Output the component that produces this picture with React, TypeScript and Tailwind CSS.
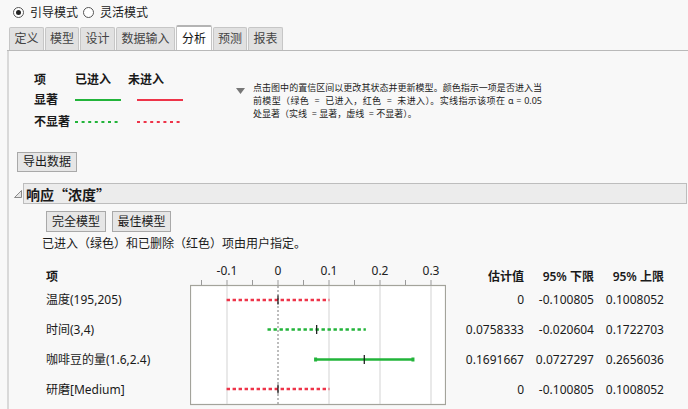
import React from "react";

const G = "#22b43a";
const R = "#ee3449";

const X = (v: number) => 88 + v * 510;

function Radio({ checked }: { checked?: boolean }) {
  return (
    <span className="w-[11px] h-[11px] rounded-full border border-[#555] bg-white flex items-center justify-center shrink-0">
      {checked && <span className="w-[5px] h-[5px] rounded-full bg-[#222]" />}
    </span>
  );
}

const tabs = [
  { t: "定义", w: "w-[35px]" },
  { t: "模型", w: "w-[34px]" },
  { t: "设计", w: "w-[35px]" },
  { t: "数据输入", w: "w-[59px]" },
  { t: "分析", w: "w-[36px]", sel: true },
  { t: "预测", w: "w-[34px]" },
  { t: "报表", w: "w-[35px]" },
];

function LegendLine({ color, dotted }: { color: string; dotted?: boolean }) {
  return (
    <svg width="46" height="4" className="block">
      <line
        x1="0"
        y1="2"
        x2="46"
        y2="2"
        stroke={color}
        strokeWidth="2"
        strokeDasharray={dotted ? "3 3.6" : undefined}
      />
    </svg>
  );
}

type Row = {
  label: string;
  lo: number;
  hi: number;
  est: number;
  color: string;
  solid?: boolean;
  e: string;
  l: string;
  u: string;
};

const rows: Row[] = [
  { label: "温度(195,205)", lo: -0.100805, hi: 0.1008052, est: 0, color: R, e: "0", l: "-0.100805", u: "0.1008052" },
  { label: "时间(3,4)", lo: -0.020604, hi: 0.1722703, est: 0.0758333, color: G, e: "0.0758333", l: "-0.020604", u: "0.1722703" },
  { label: "咖啡豆的量(1.6,2.4)", lo: 0.0727297, hi: 0.2656036, est: 0.1691667, color: G, solid: true, e: "0.1691667", l: "0.0727297", u: "0.2656036" },
  { label: "研磨[Medium]", lo: -0.100805, hi: 0.1008052, est: 0, color: R, e: "0", l: "-0.100805", u: "0.1008052" },
];

function Plot() {
  const ticks: number[] = [];
  for (let i = -3; i <= 6; i++) ticks.push(i * 0.05);
  const labels = [-0.1, 0, 0.1, 0.2, 0.3];
  const ys = [42, 71.5, 101.5, 131];
  return (
    <svg width="256" height="148" className="block shrink-0">
      {labels.map((v) => (
        <text
          key={v}
          x={X(v)}
          y="16.5"
          textAnchor="middle"
          fontSize="12"
          fill="#222"
          fontFamily="'Noto Sans', sans-serif"
        >
          {v === 0 ? "0" : v.toFixed(1)}
        </text>
      ))}
      {ticks.map((v, i) => (
        <line key={i} x1={X(v)} x2={X(v)} y1="22" y2="27.5" stroke="#9a9a9a" strokeWidth="1" />
      ))}
      <rect x="0.5" y="27.5" width="255" height="119" fill="#fff" stroke="#a3a39b" strokeWidth="1.2" />
      {[-0.1, 0.1, 0.2, 0.3].map((v) => (
        <line key={v} x1={X(v)} x2={X(v)} y1="28" y2="146" stroke="#d3d3d3" strokeWidth="1" />
      ))}
      <line x1={X(0)} x2={X(0)} y1="28" y2="146" stroke="#7a7a7a" strokeWidth="1" strokeDasharray="2 2" />
      {rows.map((r, i) => {
        const y = ys[i];
        return (
          <g key={i}>
            <line
              x1={X(r.lo)}
              x2={X(r.hi)}
              y1={y}
              y2={y}
              stroke={r.color}
              strokeWidth="2.4"
              strokeDasharray={r.solid ? undefined : "3.4 2.6"}
            />
            {r.solid && (
              <>
                <rect x={X(r.lo) - 1} y={y - 2} width="3" height="4" fill={r.color} />
                <rect x={X(r.hi) - 2} y={y - 2} width="3" height="4" fill={r.color} />
              </>
            )}
            <line x1={X(r.est)} x2={X(r.est)} y1={y - 4.5} y2={y + 4.5} stroke="#111" strokeWidth="1.2" />
          </g>
        );
      })}
    </svg>
  );
}

export default function App() {
  return (
    <div className="w-[688px] h-[409px] overflow-hidden bg-[#f8f8f8] text-[#1a1a1a] font-['Noto_Sans','Noto_Sans_CJK_SC',sans-serif] text-[12px]">
      {/* radio row */}
      <div className="h-[25px] flex items-center pl-[13px]">
        <Radio checked />
        <span className="ml-[6px] text-[12px] leading-none">引导模式</span>
        <span className="ml-[5px]">
          <Radio />
        </span>
        <span className="ml-[6px] text-[12px] leading-none">灵活模式</span>
      </div>
      {/* tabs */}
      <div className="h-[26px] ml-[7px] pl-[2px] flex items-end gap-[1px] border-b border-[#b9b9b9]">
        {tabs.map((t) =>
          t.sel ? (
            <div
              key={t.t}
              className={`${t.w} h-[25px] bg-white border-x border-t-2 border-[#c4c4c4] border-t-[#b4b4b4] rounded-t-[2px] flex items-center justify-center text-[12px] text-[#111]`}
            >
              {t.t}
            </div>
          ) : (
            <div
              key={t.t}
              className={`${t.w} h-[23px] bg-[#e1e1e1] border-x border-t border-[#c6c6c6] rounded-t-[2px] flex items-center justify-center text-[12px] text-[#444]`}
            >
              {t.t}
            </div>
          )
        )}
      </div>
      {/* content */}
      <div className="ml-[7px] border-l-2 border-[#d9d9d9] h-[358px]">
        {/* legend + description */}
        <div className="flex items-start pt-[20px]">
          <div className="pl-[25px] w-[227px] font-semibold text-[12px]">
            <div className="h-[18px] flex items-center">
              <span className="w-[41px]">项</span>
              <span className="w-[53px]">已进入</span>
              <span>未进入</span>
            </div>
            <div className="h-[22px] flex items-center">
              <span className="w-[41px]">显著</span>
              <LegendLine color={G} />
              <span className="w-[16px]" />
              <LegendLine color={R} />
            </div>
            <div className="h-[22px] flex items-center">
              <span className="w-[41px]">不显著</span>
              <LegendLine color={G} dotted />
              <span className="w-[16px]" />
              <LegendLine color={R} dotted />
            </div>
          </div>
          <div className="flex items-start mt-[10px]">
            <svg width="9" height="6" className="mt-[7px] shrink-0">
              <polygon points="0,0 9,0 4.5,6" fill="#777" />
            </svg>
            <div className="ml-[8px] text-[9px] leading-[13px] text-[#222] whitespace-nowrap">
              <div className="w-[289px] text-justify [text-align-last:justify]">点击图中的置信区间以更改其状态并更新模型。颜色指示一项是否进入当</div>
              <div className="w-[289px] text-justify [text-align-last:justify]">前模型（绿色 &nbsp;= &nbsp;已进入，红色 &nbsp;= &nbsp;未进入）。实线指示该项在 α = 0.05</div>
              <div>处显著（实线 &nbsp;= 显著，虚线 &nbsp;= 不显著）。</div>
            </div>
          </div>
        </div>
        {/* export button */}
        <div className="mt-[19px] ml-[8px]">
          <div className="w-[60px] h-[20px] border border-[#a9a9a9] bg-[#e6e6e6] flex items-center justify-center text-[12px]">
            导出数据
          </div>
        </div>
        {/* section header */}
        <div className="mt-[11px] flex items-center">
          <svg width="10" height="10" className="ml-[4px] mr-[0px] shrink-0">
            <path d="M8.5 1.5 L8.5 8.5 L1.5 8.5 Z" fill="#e6e6e6" stroke="#8a8a8a" strokeWidth="1" />
          </svg>
          <div className="flex-1 mr-[1px] h-[21px] border border-[#bdbdbd] bg-[#ececec] flex items-center pl-[2px]">
            <span className="font-bold text-[14px] font-['Noto_Sans_CJK_SC',sans-serif] leading-none">响应“浓度”</span>
          </div>
        </div>
        {/* model buttons */}
        <div className="mt-[7px] ml-[37px] flex gap-[6px]">
          <div className="w-[60px] h-[21px] border border-[#a9a9a9] bg-[#e6e6e6] flex items-center justify-center">完全模型</div>
          <div className="w-[59px] h-[21px] border border-[#a9a9a9] bg-[#e6e6e6] flex items-center justify-center">最佳模型</div>
        </div>
        <div className="mt-[4px] ml-[33px] leading-[16px] text-[12px]">已进入（绿色）和已删除（红色）项由用户指定。</div>
        {/* table */}
        <div className="mt-[6px] flex">
          <div className="ml-[37px] w-[144px]">
            <div className="h-[27px] flex items-end font-semibold leading-[16px]">项</div>
            {rows.map((r) => (
              <div key={r.label} className="h-[30px] flex items-center">
                {r.label}
              </div>
            ))}
          </div>
          <Plot />
          {(
            [
              { h: "估计值", k: "e", w: "w-[78px]" },
              { h: "95% 下限", k: "l", w: "w-[70px]" },
              { h: "95% 上限", k: "u", w: "w-[70px]" },
            ] as const
          ).map((c) => (
            <div key={c.h} className={`${c.w} text-right`}>
              <div className="h-[27px] flex items-end justify-end font-semibold leading-[16px]">{c.h}</div>
              {rows.map((r, i) => (
                <div key={i} className="h-[30px] flex items-center justify-end">
                  {r[c.k]}
                </div>
              ))}
            </div>
          ))}
        </div>
      </div>
    </div>
  );
}
